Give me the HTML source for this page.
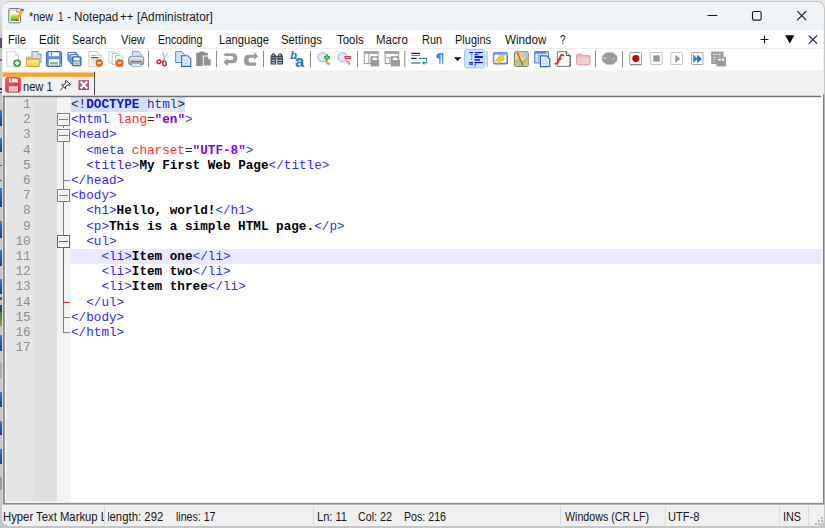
<!DOCTYPE html>
<html><head><meta charset="utf-8"><title>Notepad++</title>
<style>
*{margin:0;padding:0;box-sizing:border-box}
html,body{width:825px;height:528px;overflow:hidden;background:#e6e6e6;font-family:"Liberation Sans",sans-serif}
#bgl{position:absolute;left:0;top:0;width:825px;height:528px;background:linear-gradient(#e6e6e6 0,#e0e0e0 10px,#c6c6c6 40px,#c6c6c6 100%)}
#bgr{position:absolute;left:822px;top:0;width:3px;height:528px;background:linear-gradient(#e8e8e8 0,#e6e6e6 400px,#c8c8c8 528px)}
#bgb{position:absolute;left:0;top:525px;width:825px;height:3px;background:#c4c4c4}
#win{position:absolute;left:1.5px;top:1px;width:823px;height:525.5px;border-radius:8px;background:#f0f0f0;overflow:hidden;border:1px solid #c6c6c6;border-left-color:#ededed}
.abs{position:absolute}
#clip{position:absolute;left:0;top:0;width:825px;height:528px;clip-path:inset(1.8px 0.5px 2px 2.2px round 7.5px)}
#titlebar{position:absolute;left:0;top:0;width:825px;height:30px;background:#eff4f9}
#menubar{position:absolute;left:0;top:30px;width:825px;height:18px;background:#fff}
#toolbar{position:absolute;left:0;top:48px;width:825px;height:22px;background:#fff;border-top:1px solid #eeeeee;box-shadow:0 1px 0 #f7f7f7}
#tabbar{position:absolute;left:0;top:71px;width:825px;height:24px;background:#f0f0f0}
#editor{position:absolute;left:4px;top:95px;width:820px;height:409.5px;background:#fff;border:1px solid #808080;box-shadow:inset 0 0 0 1px #e2e2e2}
#status{position:absolute;left:0;top:505px;width:825px;height:23px;background:#f0f0f0}
.ui{position:absolute;white-space:pre;transform-origin:0 0;color:#161616;line-height:0;height:0}
.ui::before{content:"";display:inline-block;height:0;vertical-align:baseline}
.ln{position:absolute;left:71px;height:15.2px;width:751px;font-family:"Liberation Mono",monospace;font-size:12.67px;line-height:15.2px;white-space:pre}
.ln span{position:absolute;top:0;height:15.2px;display:block}
.num{position:absolute;left:0px;width:30.6px;height:15.2px;text-align:right;font-family:"Liberation Mono",monospace;font-size:12.67px;line-height:15.2px;color:#8e8e8e}
.fb{width:13px;height:13px;border:1px solid #7c7c7c;background:#f1f1f1;box-shadow:inset 0 0 0 1px #fff}
.fb i{position:absolute;left:1px;top:5px;width:9px;height:1px}
.t{color:#2c2cff} .a{color:#ff2e2e} .e{color:#262626} .v{color:#8000ff;font-weight:bold} .b{color:#000;font-weight:bold}
.d{color:#222;background:#d1e0f5} .dk{color:#1212d2;font-weight:bold;background:#d1e0f5} .dp{color:#2c2cc4;background:#e5edfa}
</style></head><body>
<div id="bgl" style="width:4px"></div><div id="bgr"></div><div id="bgb"></div>
<div class="abs" style="left:0;top:37.5px;width:1.8px;height:10.0px;background:#5b4a70"></div>
<div class="abs" style="left:0;top:58.5px;width:1.8px;height:2.5px;background:#6a6a6a"></div>
<div class="abs" style="left:0;top:88px;width:1.8px;height:1.5px;background:#2a3a8a"></div>
<div class="abs" style="left:0;top:91.5px;width:1.8px;height:1.5px;background:#2a3a8a"></div>
<div class="abs" style="left:0;top:110px;width:1.8px;height:16px;background:linear-gradient(#2f86d2,#1f5cae 45%,#17408c)"></div>
<div class="abs" style="left:0;top:138px;width:1.8px;height:14px;background:linear-gradient(#2f86d2,#1f5cae 45%,#17408c)"></div>
<div class="abs" style="left:0;top:164.5px;width:1.8px;height:1.5px;background:#555"></div>
<div class="abs" style="left:0;top:179.5px;width:1.8px;height:1.5px;background:#555"></div>
<div class="abs" style="left:0;top:188px;width:1.8px;height:19px;background:linear-gradient(#2f86d2,#1f5cae 45%,#17408c)"></div>
<div class="abs" style="left:0;top:221px;width:1.8px;height:16.5px;background:linear-gradient(#2f86d2,#1f5cae 45%,#17408c)"></div>
<div class="abs" style="left:0;top:250px;width:1.8px;height:16px;background:linear-gradient(#2f86d2,#1f5cae 45%,#17408c)"></div>
<div class="abs" style="left:0;top:279px;width:1.8px;height:15px;background:linear-gradient(#2f86d2,#1f5cae 45%,#17408c)"></div>
<div class="abs" style="left:0;top:297px;width:1.8px;height:2.5px;background:#556"></div>
<div class="abs" style="left:0;top:305px;width:1.8px;height:7px;background:#2a4a5a"></div>
<div class="abs" style="left:0;top:312px;width:1.8px;height:14px;background:linear-gradient(#4a7a3a,#7aa838)"></div>
<div class="abs" style="left:0;top:335px;width:1.8px;height:16px;background:linear-gradient(#2f86d2,#1f5cae 45%,#17408c)"></div>
<div class="abs" style="left:0;top:363px;width:1.8px;height:15px;background:#a8a8a8"></div>
<div class="abs" style="left:0;top:392px;width:1.8px;height:15px;background:linear-gradient(#2f86d2,#1f5cae 45%,#17408c)"></div>
<div class="abs" style="left:0;top:421px;width:1.8px;height:14px;background:linear-gradient(#2f86d2,#1f5cae 45%,#17408c)"></div>
<div class="abs" style="left:0;top:448.5px;width:1.8px;height:15.0px;background:linear-gradient(#2f86d2,#1f5cae 45%,#17408c)"></div>
<div class="abs" style="left:0;top:477px;width:1.8px;height:13px;background:#9c9c9c"></div>
<div id="win"></div>
<div id="clip">
<div id="titlebar" style="left:3px;top:2px;width:820px;height:28px;border-radius:7px 7px 0 0"></div>
<div id="menubar" style="left:3px;width:820px"></div>
<div id="toolbar" style="left:3px;width:820px"></div>
<div id="tabbar" style="left:3px;width:820px"></div>
<div class="abs" style="left:3px;top:96px;width:821px;height:408px;background:#fff"></div>
<!-- margins -->
<div class="abs" style="left:5px;top:97px;width:28px;height:405px;background:#e5e5e5"></div>
<div class="abs" style="left:33px;top:97px;width:24px;height:405px;background:#e0e0e0"></div>
<div class="abs" style="left:57px;top:97px;width:14px;height:405px;background:#f3f3f3"></div>
<!-- current line highlight -->
<div class="abs" style="left:71px;top:249px;width:751px;height:15.2px;background:#e8e8ff"></div>
<div class="ln" style="top:97.0px"><span class="d" style="left:0.0px;width:15.2px">&lt;!</span><span class="dk" style="left:15.2px;width:53.2px">DOCTYPE</span><span class="d" style="left:68.4px;width:7.6px"> </span><span class="dp" style="left:76.0px;width:30.4px">html</span><span class="d" style="left:106.4px;width:7.6px">&gt;</span></div>
<div class="num" style="top:97.0px">1</div>
<div class="ln" style="top:112.2px"><span class="t" style="left:0.0px;width:38.0px">&lt;html</span><span class="a" style="left:45.6px;width:30.4px">lang</span><span class="e" style="left:76.0px;width:7.6px">=</span><span class="v" style="left:83.6px;width:30.4px">"en"</span><span class="t" style="left:114.0px;width:7.6px">&gt;</span></div>
<div class="num" style="top:112.2px">2</div>
<div class="ln" style="top:127.4px"><span class="t" style="left:0.0px;width:45.6px">&lt;head&gt;</span></div>
<div class="num" style="top:127.4px">3</div>
<div class="ln" style="top:142.6px"><span class="t" style="left:15.2px;width:38.0px">&lt;meta</span><span class="a" style="left:60.8px;width:53.2px">charset</span><span class="e" style="left:114.0px;width:7.6px">=</span><span class="v" style="left:121.6px;width:53.2px">"UTF-8"</span><span class="t" style="left:174.8px;width:7.6px">&gt;</span></div>
<div class="num" style="top:142.6px">4</div>
<div class="ln" style="top:157.8px"><span class="t" style="left:15.2px;width:53.2px">&lt;title&gt;</span><span class="b" style="left:68.4px;width:129.2px">My First Web Page</span><span class="t" style="left:197.6px;width:60.8px">&lt;/title&gt;</span></div>
<div class="num" style="top:157.8px">5</div>
<div class="ln" style="top:173.0px"><span class="t" style="left:0.0px;width:53.2px">&lt;/head&gt;</span></div>
<div class="num" style="top:173.0px">6</div>
<div class="ln" style="top:188.2px"><span class="t" style="left:0.0px;width:45.6px">&lt;body&gt;</span></div>
<div class="num" style="top:188.2px">7</div>
<div class="ln" style="top:203.4px"><span class="t" style="left:15.2px;width:30.4px">&lt;h1&gt;</span><span class="b" style="left:45.6px;width:98.8px">Hello, world!</span><span class="t" style="left:144.4px;width:38.0px">&lt;/h1&gt;</span></div>
<div class="num" style="top:203.4px">8</div>
<div class="ln" style="top:218.6px"><span class="t" style="left:15.2px;width:22.8px">&lt;p&gt;</span><span class="b" style="left:38.0px;width:205.2px">This is a simple HTML page.</span><span class="t" style="left:243.2px;width:30.4px">&lt;/p&gt;</span></div>
<div class="num" style="top:218.6px">9</div>
<div class="ln" style="top:233.8px"><span class="t" style="left:15.2px;width:30.4px">&lt;ul&gt;</span></div>
<div class="num" style="top:233.8px">10</div>
<div class="ln" style="top:249.0px"><span class="t" style="left:30.4px;width:30.4px">&lt;li&gt;</span><span class="b" style="left:60.8px;width:60.8px">Item one</span><span class="t" style="left:121.6px;width:38.0px">&lt;/li&gt;</span></div>
<div class="num" style="top:249.0px">11</div>
<div class="ln" style="top:264.2px"><span class="t" style="left:30.4px;width:30.4px">&lt;li&gt;</span><span class="b" style="left:60.8px;width:60.8px">Item two</span><span class="t" style="left:121.6px;width:38.0px">&lt;/li&gt;</span></div>
<div class="num" style="top:264.2px">12</div>
<div class="ln" style="top:279.4px"><span class="t" style="left:30.4px;width:30.4px">&lt;li&gt;</span><span class="b" style="left:60.8px;width:76.0px">Item three</span><span class="t" style="left:136.8px;width:38.0px">&lt;/li&gt;</span></div>
<div class="num" style="top:279.4px">13</div>
<div class="ln" style="top:294.6px"><span class="t" style="left:15.2px;width:38.0px">&lt;/ul&gt;</span></div>
<div class="num" style="top:294.6px">14</div>
<div class="ln" style="top:309.8px"><span class="t" style="left:0.0px;width:53.2px">&lt;/body&gt;</span></div>
<div class="num" style="top:309.8px">15</div>
<div class="ln" style="top:325.0px"><span class="t" style="left:0.0px;width:53.2px">&lt;/html&gt;</span></div>
<div class="num" style="top:325.0px">16</div>
<div class="ln" style="top:340.2px"></div>
<div class="num" style="top:340.2px">17</div>
<div class="abs" style="left:63px;top:126.3px;width:1px;height:2.2px;background:#808080"></div>
<div class="abs" style="left:63px;top:141.5px;width:1px;height:47.8px;background:#808080"></div>
<div class="abs" style="left:63px;top:202.3px;width:1px;height:32.6px;background:#808080"></div>
<div class="abs" style="left:63px;top:247.9px;width:1px;height:54.3px;background:#ff2020"></div>
<div class="abs" style="left:63px;top:302.2px;width:1px;height:30.4px;background:#808080"></div>
<div class="abs" style="left:63px;top:180.1px;width:7px;height:1px;background:#808080"></div>
<div class="abs" style="left:63px;top:301.7px;width:7px;height:1px;background:#ff2020"></div>
<div class="abs" style="left:63px;top:316.9px;width:7px;height:1px;background:#808080"></div>
<div class="abs" style="left:63px;top:332.1px;width:7px;height:1px;background:#808080"></div>
<div class="abs fb" style="left:57px;top:113.3px;border-color:#7c7c7c"><i style="background:#7c7c7c"></i></div>
<div class="abs fb" style="left:57px;top:128.5px;border-color:#7c7c7c"><i style="background:#7c7c7c"></i></div>
<div class="abs fb" style="left:57px;top:189.3px;border-color:#7c7c7c"><i style="background:#7c7c7c"></i></div>
<div class="abs fb" style="left:57px;top:234.9px;border-color:#ff2020"><i style="background:#ff2020"></i></div>
<svg class="abs" style="left:0;top:90px" width="825" height="420" viewBox="0 90 825 420">
<rect x="4.8" y="97" width="1" height="405" fill="#fff"/>
<rect x="4.8" y="501.5" width="817" height="1.4" fill="#fafafa"/>
<rect x="821.2" y="96" width="1.9" height="407" fill="#f6f6f6"/>
<rect x="2.8" y="94.6" width="820" height="1" fill="#fcfcfc"/>
<rect x="2.8" y="95.7" width="2" height="408" fill="#868686"/>
<rect x="2.8" y="95.7" width="818.4" height="1.5" fill="#727272"/>
<rect x="2.8" y="502.9" width="821.7" height="1.9" fill="#8a8a8a"/>
<rect x="823" y="94.3" width="1.5" height="410.5" fill="#808080"/>
<rect x="2.6" y="504.8" width="822" height=".8" fill="#fafafa"/>
<rect x="1.9" y="505" width="1.1" height="19" fill="#fafafa"/>
</svg>
<!-- tab -->
<svg class="abs" style="left:0;top:70px" width="100" height="10" viewBox="0 70 100 10"><rect x="2.5" y="72.5" width="91.2" height="4.3" fill="#faa02c"/></svg>
<div class="abs" style="left:3px;top:77px;width:91px;height:18px;background:#f1f1f1"></div>
<div class="abs" style="left:94px;top:72px;width:1px;height:23px;background:#4a4a4a"></div>
<!-- window controls -->
<svg class="abs" style="left:0;top:0" width="825" height="48" viewBox="0 0 825 48">
 <g fill="none" stroke="#1b1b1b" stroke-width="1.15" stroke-linecap="round">
  <path d="M708 15.5H717"/>
  <rect x="752.5" y="11.5" width="8.6" height="8.6" rx="1.6"/>
  <path d="M797.5 11.3L806 19.8M806 11.3L797.5 19.8"/>
  <path d="M761 39.5H768M764.5 36V43" stroke="#111"/>
  <path d="M809 35.8L816.8 43.4M816.8 35.8L809 43.4" stroke="#1a2a55" stroke-width="1.2"/>
 </g>
 <path d="M785.2 35.3H794.4L789.8 43.6Z" fill="#000"/>
 <!-- title icon -->
 <g>
  <rect x="8.8" y="8.6" width="11.6" height="14.2" rx="1" fill="#fff" stroke="#6e6e6e" stroke-width="1"/>
  <path d="M16.8 8.6V12.2H20.4" fill="#e8e8e8" stroke="#6e6e6e" stroke-width=".8"/>
  <path d="M10 10.3H16" stroke="#999" stroke-width="1" stroke-dasharray="1 .8"/>
  <defs><linearGradient id="gg" x1="0" y1="0" x2="0" y2="1"><stop offset="0" stop-color="#e6ee70"/><stop offset=".55" stop-color="#7ed63a"/><stop offset=".85" stop-color="#30b41c"/><stop offset="1" stop-color="#0f7a0a"/></linearGradient></defs>
  <rect x="10.6" y="14.3" width="8.4" height="6.4" fill="url(#gg)"/>
  <path d="M18.03 20.29L15.77 18.99L20.35 11.01L22.61 12.31Z" fill="#f4a60e"/>
  <path d="M16.9 19.64L20.35 11.01L21.5 11.7Z" fill="#fcc84a" opacity=".7"/>
  <path d="M16 21.2L18.03 20.29L15.77 18.99Z" fill="#6a4a20"/>
  <path d="M20.35 11.01L22.61 12.31L23.31 11.1L21.05 9.8Z" fill="#a8aec0"/>
  <path d="M21.05 9.8L23.31 11.1L24 9.89L21.74 8.59Z" fill="#a80a0a"/>
 </g>
</svg>
<!-- toolbar icons -->
<svg class="abs" style="left:0;top:48px" width="825" height="24" viewBox="0 48 825 24">
<defs>
 <linearGradient id="gfold" x1="0" y1="0" x2="0" y2="1"><stop offset="0" stop-color="#fdf0a0"/><stop offset="1" stop-color="#f8d24a"/></linearGradient>
 <linearGradient id="gprn" x1="0" y1="0" x2="0" y2="1"><stop offset="0" stop-color="#f4f4f4"/><stop offset=".5" stop-color="#c8c8c8"/><stop offset="1" stop-color="#8e8e8e"/></linearGradient>
 <linearGradient id="gpil" x1="0" y1="0" x2="0" y2="1"><stop offset="0" stop-color="#2a7af0"/><stop offset="1" stop-color="#6ab0ff"/></linearGradient>
</defs>
<!-- separators -->
<g stroke="#8c8c8c" stroke-width="1">
 <path d="M148.5 50.8V67.2M216.5 50.8V67.2M263.5 50.8V67.2M310.5 50.8V67.2M357.5 50.8V67.2M404.8 50.8V67.2M595.5 50.8V67.2M622.5 50.8V67.2"/>
</g>
<path d="M487 51V67" stroke="#c4c4c4" stroke-width="1.6"/>

<!-- 1 new -->
<path d="M6.9 51.7H15.2L18.7 55.2V66.3H6.9Z" fill="#fff" stroke="#cdcdcd"/>
<path d="M15.2 51.7V55.2H18.7" fill="#f2f2f2" stroke="#d4d4d4"/>
<circle cx="17.2" cy="63.2" r="3.8" fill="#2f8f22"/>
<circle cx="17.2" cy="63.2" r="3" fill="#48a838"/>
<path d="M15 63.2H19.4M17.2 61V65.4" stroke="#fff" stroke-width="1.7"/>

<!-- 2 open -->
<path d="M31.9 51.6H38L41 54.6V62.6H31.9Z" fill="#cfe0f8" stroke="#6a98e0"/>
<path d="M38 51.6V54.6H41" fill="#e8f0fc" stroke="#6a98e0" stroke-width=".8"/>
<path d="M26.4 57.2H30.8L31.8 58.6H39.3V66.4H26.4Z" fill="#f6b648" stroke="#e59a28"/>
<rect x="27" y="60.2" width="11.8" height="5.7" fill="url(#gfold)"/>

<!-- 3 save -->
<rect x="46.4" y="51.6" width="15.2" height="14.9" rx="1.6" fill="#5d8cdc" stroke="#3868c4"/>
<rect x="48.8" y="52.4" width="10.4" height="3.8" fill="#fff"/>
<rect x="50.8" y="52.8" width="1.2" height="2.6" fill="#3868c4"/>
<rect x="48.8" y="59.2" width="10.4" height="6.3" fill="#f2f6ff"/>
<rect x="50" y="62" width="8" height="2.5" fill="#86c456"/>
<rect x="59.8" y="64.4" width="1.1" height="1.1" fill="#fff"/>

<!-- 4 save all -->
<rect x="67.9" y="52.3" width="8.6" height="8.8" rx=".8" fill="#8db2ec" stroke="#4a78cc"/>
<rect x="69.2" y="53" width="5.4" height="2" fill="#e8f0ff"/>
<rect x="70" y="54.6" width="8.6" height="8.8" rx=".8" fill="#8db2ec" stroke="#4a78cc"/>
<rect x="71.4" y="55.2" width="5.4" height="2" fill="#e8f0ff"/>
<rect x="72.2" y="56.8" width="8.8" height="9" rx=".8" fill="#4f80d6" stroke="#2d5cb8"/>
<rect x="73.6" y="57.6" width="6" height="2.8" fill="#fff"/>
<rect x="73.4" y="61.6" width="6.4" height="3.4" fill="#dfeaff"/>
<rect x="73.9" y="62.7" width="5.4" height="1.8" fill="#8fd24c"/>

<!-- 5 close -->
<path d="M88.9 51.7H97.5L101.1 55.3V66.3H88.9Z" fill="#fff" stroke="#c6c6c6"/>
<path d="M97.5 51.7V55.3H101.1" fill="#f2f2f2" stroke="#c6c6c6" stroke-width=".8"/>
<path d="M91 55.4H96.5" stroke="#999" stroke-width=".9"/>
<path d="M91 57.6H98.6" stroke="#555" stroke-width="1.1"/>
<path d="M91 59.8H98" stroke="#b4b4b4" stroke-width=".9"/>
<path d="M91 62H95" stroke="#c4c4c4" stroke-width=".9"/>
<path d="M91 64H94" stroke="#d4d4d4" stroke-width=".9"/>
<circle cx="99.2" cy="62.9" r="3.7" fill="#dc5810"/>
<circle cx="99.2" cy="62.9" r="2.9" fill="#f06a18"/>
<rect x="97.4" y="62.2" width="3.6" height="1.4" fill="#fff"/>

<!-- 6 close all -->
<path d="M108.9 51.7H113.8L116.4 54.2V63H108.9Z" fill="#fff" stroke="#cacaca"/>
<path d="M112.2 53.4H117.5L120.2 56V64.8H112.2Z" fill="#fff" stroke="#b8b8b8"/>
<path d="M115.6 55.4H120.4L123 58V66.5H115.6Z" fill="#fff" stroke="#bcbcbc"/>
<path d="M117 58.6H120" stroke="#ccc" stroke-width=".9"/>
<circle cx="119.6" cy="63" r="3.7" fill="#dc5810"/>
<circle cx="119.6" cy="63" r="2.9" fill="#f06a18"/>
<rect x="117.8" y="62.3" width="3.6" height="1.4" fill="#fff"/>

<!-- 7 print -->
<path d="M132.3 51.6H138.5L141.2 54.3V58H132.3Z" fill="#d6e6fc" stroke="#6c9ee6"/>
<rect x="128.7" y="56.3" width="15" height="8.7" rx="2.2" fill="url(#gprn)" stroke="#7a7a7a" stroke-width=".9"/>
<rect x="131" y="61" width="10.4" height="1.1" fill="#6e6e6e"/>
<rect x="131.8" y="63.4" width="8.8" height="3.1" rx=".8" fill="#e6f0ff" stroke="#7eace8" stroke-width=".9"/>

<!-- 8 cut -->
<path d="M163.2 51.6L164.6 60.8" stroke="#9bbbe0" stroke-width="1.2"/>
<path d="M167.8 53L162.6 61" stroke="#a8c6e6" stroke-width="1.3"/>
<ellipse cx="159" cy="61.8" rx="2" ry="1.6" transform="rotate(-35 159 61.8)" fill="none" stroke="#cc2a2a" stroke-width="1.5"/>
<ellipse cx="164.4" cy="63.4" rx="1.7" ry="2.4" transform="rotate(-10 164.4 63.4)" fill="none" stroke="#cc2a2a" stroke-width="1.5"/>

<!-- 9 copy -->
<path d="M175.7 51.7H181.6L184.6 54.7V62.5H175.7Z" fill="#dde9fb" stroke="#4a7edc"/>
<path d="M177.4 55H182.6M177.4 57H182.6M177.4 59H182.6" stroke="#b8d0f4" stroke-width=".8"/>
<path d="M181.7 55.7H187.8L190.8 58.7V66.4H181.7Z" fill="#e6effc" stroke="#2f62cc" stroke-width="1.1"/>
<path d="M183.6 59.4H188.6M183.6 61.4H188.6M183.6 63.4H188.6" stroke="#b4ccf4" stroke-width=".8"/>

<!-- 10 paste (disabled) -->
<rect x="196.2" y="52.8" width="11.6" height="13.2" fill="#8e8e8e"/>
<rect x="199.4" y="51.6" width="5.2" height="2.4" fill="#8e8e8e"/>
<path d="M202.8 55.6H208.6L211.6 58.6V66.4H202.8Z" fill="#fff"/>
<path d="M203.7 56.5H208.1V59.2H210.7V65.6H203.7Z" fill="#949494"/>

<!-- 11 undo -->
<path d="M224.4 53.2H233Q237.3 53.2 237.3 58.2Q237.3 63.3 233 63.3H227.2V60.1H231.6Q233.4 60.1 233.4 58.1Q233.4 56.1 231.6 56.1H224.4Z" fill="#9a9a9a"/>
<path d="M227.8 58.4L223.3 62.3L227.8 66.3Z" fill="#9a9a9a"/>
<!-- 12 redo -->
<path d="M254.6 54.8H248.5Q244 54.8 244 60.2Q244 65.7 248.5 65.7H256V62.4H250.2Q248.5 62.4 248.5 60Q248.5 57.7 250.2 57.7H254.6Z" fill="#9a9a9a"/>
<path d="M254.2 52.2L258.3 56.1L254.2 60Z" fill="#9a9a9a"/>

<!-- 13 find -->
<path d="M272.2 53.4H274.8L276.2 56.6V64.4H270.6V56.6Z" fill="#343a42"/>
<path d="M278.8 53.4H281.4L283 56.6V64.4H277.4V56.6Z" fill="#343a42"/>
<rect x="275.6" y="55.8" width="2.4" height="2.8" fill="#4c545e"/>
<rect x="272.4" y="54.4" width="1.8" height="1.8" fill="#8eaccc"/>
<rect x="279" y="54.4" width="1.8" height="1.8" fill="#8eaccc"/>
<rect x="270.6" y="57.2" width="12.4" height="1.2" fill="#7c96b4"/>
<rect x="271.6" y="59.8" width="3.6" height="1.2" fill="#c2d2e4"/>
<rect x="271.6" y="62.2" width="3.6" height="1.2" fill="#c2d2e4"/>
<rect x="278.4" y="59.8" width="3.6" height="1.2" fill="#c2d2e4"/>
<rect x="278.4" y="62.2" width="3.6" height="1.2" fill="#c2d2e4"/>

<!-- 14 replace -->
<text x="290.2" y="58.8" font-family="Liberation Sans" font-weight="bold" font-style="italic" font-size="11" fill="#2a6ee6">b</text>
<text x="295" y="66.6" font-family="Liberation Sans" font-weight="bold" font-size="16.5" fill="#2a72e8">a</text>
<path d="M294.4 56.4L297.6 58.4L298.8 57.2L299.6 61.8L295.2 61L296.4 59.8L293.6 57.6Z" fill="#2f9a3c"/>
<path d="M295.8 58L297.8 59.6" stroke="#a8e0a0" stroke-width=".8"/>

<!-- 15 zoom in -->
<path d="M326.2 61.6L328.8 64" stroke="#d4a566" stroke-width="2.4" stroke-linecap="round"/>
<circle cx="322.4" cy="57.2" r="4.5" fill="#dde9fb" stroke="#a6c2ee" stroke-width="1.3"/>
<path d="M324 57.4H330M327 54.4V60.4" stroke="#36a040" stroke-width="2.6"/>
<path d="M325.4 57.4H328.6M327 55.8V59" stroke="#8ad08a" stroke-width=".9"/>
<!-- 16 zoom out -->
<path d="M347 61.4L349.6 63.8" stroke="#d4a566" stroke-width="2.4" stroke-linecap="round"/>
<circle cx="342.4" cy="57.2" r="4.5" fill="#dde9fb" stroke="#a6c2ee" stroke-width="1.3"/>
<rect x="344.4" y="56" width="6.5" height="2.9" fill="#f02c34"/>
<rect x="345.4" y="57" width="4.5" height=".9" fill="#ffb0b0"/>

<!-- 17 sync v -->
<rect x="364.3" y="52" width="13.8" height="11.6" fill="#fff" stroke="#9a9a9a"/>
<rect x="363.8" y="51.5" width="14.8" height="2.3" fill="#9a9a9a"/>
<path d="M368.9 53.8V63.6" stroke="#9a9a9a"/>
<rect x="370.6" y="56.2" width="7.6" height="4.4" fill="#9a9a9a"/>
<path d="M372.4 60.2A2.5 2.6 0 0 1 377.4 60.2Z" fill="#fff"/>
<rect x="370.6" y="60" width="8.6" height="6.4" fill="#9a9a9a"/>
<rect x="371.6" y="54.6" width="5.6" height="1.3" fill="#fff"/>
<!-- 18 sync h -->
<rect x="385.1" y="52" width="13.6" height="11.6" fill="#fff" stroke="#9a9a9a"/>
<rect x="384.6" y="51.5" width="14.6" height="2.3" fill="#9a9a9a"/>
<path d="M385 57.6H391M389.6 57.6V63.6" stroke="#b0b0b0"/>
<rect x="390.8" y="56.2" width="7.9" height="4.4" fill="#9a9a9a"/>
<path d="M392.6 60.2A2.6 2.6 0 0 1 397.8 60.2Z" fill="#fff"/>
<rect x="390.6" y="60" width="9.4" height="6.4" fill="#9a9a9a"/>

<!-- 19 wrap -->
<rect x="411.2" y="52.8" width="8.8" height="1.2" fill="#222"/>
<rect x="411.2" y="54.9" width="8.8" height="1.1" fill="#777"/>
<rect x="411.2" y="57.8" width="5.5" height="1.2" fill="#222"/>
<path d="M419 58.4H426.6V62.9H423.6" fill="none" stroke="#3f7fe4" stroke-width="1.1"/>
<path d="M424.4 60.7L422 62.9L424.4 65.1Z" fill="#2f6fd8"/>
<rect x="411.2" y="62" width="9.3" height="1.9" fill="#6ea4f2"/>

<!-- 20 pilcrow -->
<path d="M439.2 53.2H443.3V54.5H439.2Z" fill="#2f7ef0"/>
<rect x="439.1" y="53.2" width="1.5" height="11" fill="url(#gpil)"/>
<rect x="441.8" y="53.2" width="1.5" height="11" fill="url(#gpil)"/>
<path d="M439.3 53.2V58.8A2.9 2.8 0 0 1 439.3 53.2Z" fill="#3a86f2"/>

<!-- 21 dropdown -->
<path d="M454 57.3H461.2L457.6 61.3Z" fill="#000"/>

<!-- 22 indent guide (checked) -->
<rect x="464.5" y="49.4" width="20.2" height="18.6" rx="2.2" fill="#cce4ff" stroke="#99ccff" stroke-width="1"/>
<g fill="#0a14f0">
 <rect x="469.2" y="52" width="3.8" height="1.1"/><rect x="474.6" y="52" width="8.2" height="1.1"/>
 <rect x="474.6" y="54.2" width="3.6" height="1.1"/>
 <rect x="474.6" y="56" width="8.2" height="2.1"/>
 <rect x="474.6" y="59.2" width="5.4" height="1.5"/>
 <rect x="469.2" y="62" width="3.8" height="1.1"/><rect x="474.6" y="62" width="8.2" height="1.1"/>
 <rect x="469.2" y="63.6" width="3.8" height="1.1"/><rect x="474.6" y="63.6" width="1.6" height="1.1"/>
 <rect x="474.6" y="65.6" width="1" height="1"/>
</g>
<path d="M471.6 54V61" stroke="#f03040" stroke-width="1.1" stroke-dasharray="1.2 1.2"/>

<!-- 23 window + bolt -->
<rect x="493.6" y="52.8" width="13.6" height="10.8" rx="1" fill="#fff" stroke="#5f94dc" stroke-width="1.5"/>
<rect x="493.6" y="52.4" width="13.6" height="2.4" rx=".8" fill="#6fa2e6"/>
<path d="M494 63.8H507.4V56" fill="none" stroke="#4676c2" stroke-width="1"/>
<path d="M499.6 55.6H505L502.6 58.2H505L503.2 61H500L497.6 65.8L498.2 61H495.2Z" fill="#f6c834" stroke="#e4ac1c" stroke-width=".5"/>

<!-- 24 map -->
<rect x="514.4" y="51.7" width="13.8" height="14.8" rx="1.8" fill="#ece470" stroke="#84806c" stroke-width="1.1"/>
<path d="M515 60L519.5 58L522 66H515Z" fill="#98d878"/>
<path d="M522.4 61L527.6 59.5V66H523.6Z" fill="#a6dc80"/>
<rect x="522.4" y="52.4" width="5.2" height="5.2" fill="#a4caf0"/>
<path d="M527.2 58L521.8 63.4" stroke="#f09838" stroke-width="1.4"/>
<path d="M517.2 52.4L523 65.8" stroke="#f2486a" stroke-width="1.6"/>
<path d="M519.4 52.4L521 56" stroke="#f8a0b0" stroke-width="1"/>

<!-- 25 doc list -->
<rect x="534.7" y="51.7" width="13.8" height="11.3" rx="1" fill="#dbe8fb" stroke="#4c86e0" stroke-width="1.2"/>
<rect x="534.7" y="51.4" width="13.8" height="2.2" fill="#4c86e0"/>
<rect x="546.2" y="51.9" width="1.5" height="1.3" fill="#fff"/>
<path d="M538.6 54V63M541.6 54V56" stroke="#7aa6ec" stroke-width=".9"/>
<path d="M540.4 55.9H546.6L549.8 59.1V66.6H540.4Z" fill="#e6effc" stroke="#2f62cc" stroke-width="1.2"/>
<path d="M542.4 59.6H547.6M542.4 61.6H547.6M542.4 63.6H547.6" stroke="#b4ccf4" stroke-width=".8"/>

<!-- 26 function list -->
<path d="M557.3 51.7H566.4L570.2 55.5V66.4H557.3Z" fill="#fffef8" stroke="#6a6a6a" stroke-width=".9"/>
<path d="M566.4 51.7V55.5H570.2" fill="#eee" stroke="#333" stroke-width=".9"/>
<path d="M570.2 56V66" stroke="#222" stroke-width="1" stroke-dasharray="1.6 1.2"/>
<path d="M555.4 63.6C557.2 64.2 558.3 62.4 559 60L560.5 56.2C561.2 54.6 562.4 54.5 563.4 55.3" fill="none" stroke="#e8222e" stroke-width="1.8" stroke-linecap="round"/>
<path d="M557.4 59.2H561.6" stroke="#e8222e" stroke-width="1.4"/>

<!-- 27 folder as workspace -->
<path d="M576.6 55.4Q576.6 54.2 577.8 54.2H581.5L582.8 55.6H588.8Q590 55.6 590 56.8V63.6Q590 64.8 588.8 64.8H577.8Q576.6 64.8 576.6 63.6Z" fill="#eeaab2" stroke="#e48c96" stroke-width=".8"/>
<rect x="577.3" y="57.8" width="12" height="6.3" rx=".6" fill="#f6ccd0"/>
<path d="M578 57H586" stroke="#f8dcdc" stroke-width=".8"/>

<!-- 28 monitoring -->
<path d="M606.4 52.8H613L616.8 56V61L613 64.2H606.4L602.4 61V56Z" fill="#9a9a9a" stroke="#9a9a9a" stroke-width=".6" stroke-linejoin="round"/>
<path d="M603.8 57.6L604.8 58.6L606 57.2" fill="none" stroke="#fff" stroke-width=".9"/>
<path d="M612.6 58.4H614.6" stroke="#e0e0e0" stroke-width=".9"/>

<!-- 29-32 macro -->
<rect x="629.7" y="52.5" width="11.9" height="12" rx="1" fill="#fff" stroke="#9c9c9c"/>
<path d="M630 64.8H641.8" stroke="#777" stroke-width=".8"/>
<circle cx="635.8" cy="58.4" r="3.5" fill="#cc0008"/>
<rect x="650.4" y="52.5" width="11.7" height="12" rx="1" fill="#fff" stroke="#c4c4c4"/>
<rect x="653.2" y="55.4" width="6.6" height="6.2" fill="#9a9a9a"/>
<rect x="670.8" y="52.5" width="11.7" height="12" rx="1" fill="#fff" stroke="#c4c4c4"/>
<path d="M675.2 54.8L680.6 58.8L675.2 62.8Z" fill="#9c9c9c"/>
<rect x="691.6" y="52.5" width="11.4" height="12" rx="1" fill="#fff" stroke="#a8a8a8"/>
<path d="M693.2 54.4L697.8 58.8L693.2 63.2Z" fill="#3a7cf0"/>
<path d="M697.2 54.4L702 58.8L697.2 63.2Z" fill="#2a6ae6"/>

<!-- 33 save macro -->
<rect x="711.2" y="51.6" width="12.4" height="12.4" fill="#9a9a9a"/>
<path d="M713 54.4H721.6" stroke="#e8e8e8" stroke-width="1.2" stroke-dasharray="2 .8"/>
<path d="M713 57.4H716M713 59.6H716M713 61.8H715" stroke="#ddd" stroke-width=".9"/>
<rect x="716.4" y="57" width="9.6" height="9.4" fill="#9a9a9a"/>
<path d="M716.4 57H726" stroke="#b8b8b8" stroke-width=".8"/>
<rect x="718.2" y="58.6" width="2.6" height="2.2" fill="#f0f0f0"/>
<rect x="721.8" y="58.6" width="2.6" height="2.2" fill="#f0f0f0"/>
</svg>

<!-- tab icons -->
<svg class="abs" style="left:0;top:72px" width="100" height="24" viewBox="0 72 100 24">
 <defs><linearGradient id="gred" x1="0" y1="0" x2="1" y2="1"><stop offset="0" stop-color="#f2606a"/><stop offset="1" stop-color="#d82832"/></linearGradient>
 <linearGradient id="gcl" x1="0" y1="0" x2="0" y2="1"><stop offset="0" stop-color="#b06a8e"/><stop offset="1" stop-color="#964a72"/></linearGradient></defs>
 <rect x="5.6" y="77.5" width="14.8" height="14.7" rx="1.8" fill="url(#gred)" stroke="#e03a46" stroke-width=".8"/>
 <rect x="9" y="78.6" width="8.8" height="3.8" fill="#fff"/>
 <rect x="10.8" y="79" width="1.2" height="2.6" fill="#e8505a"/>
 <rect x="8.8" y="86.4" width="9.2" height="5" fill="#fdeaea"/>
 <rect x="10" y="88.4" width="6.8" height="2" fill="#f4a8ae"/>
 <!-- pin -->
 <g fill="none" stroke="#222" stroke-width="1" stroke-linejoin="round">
  <path d="M66.2 80.4L70.4 84.6L69.4 85.2L67.6 84.8L65.4 87L65.6 88.8L61.6 84.8L63.4 85L65.6 82.8L65.4 81Z"/>
  <path d="M63.6 86.8L60.2 90.2"/>
 </g>
 <!-- close -->
 <rect x="78.4" y="80" width="10.6" height="10" fill="url(#gcl)"/>
 <path d="M80.6 81.6L87.2 88.4M87.2 81.6L80.6 88.4" stroke="#fff" stroke-width="2.1"/>
</svg>

<div id="m0" class="ui" style="left:8.48px;top:40.34px;font-size:12.3px;transform:scaleX(0.9118);">File</div>
<div id="m1" class="ui" style="left:39.44px;top:40.34px;font-size:12.3px;transform:scaleX(0.9502);">Edit</div>
<div id="m2" class="ui" style="left:72.30px;top:40.34px;font-size:12.3px;transform:scaleX(0.8816);">Search</div>
<div id="m3" class="ui" style="left:120.50px;top:40.34px;font-size:12.3px;transform:scaleX(0.9039);">View</div>
<div id="m4" class="ui" style="left:157.80px;top:40.34px;font-size:12.3px;transform:scaleX(0.8667);">Encoding</div>
<div id="m5" class="ui" style="left:218.95px;top:40.34px;font-size:12.3px;transform:scaleX(0.9139);">Language</div>
<div id="m6" class="ui" style="left:281.45px;top:40.34px;font-size:12.3px;transform:scaleX(0.9195);">Settings</div>
<div id="m7" class="ui" style="left:336.50px;top:40.34px;font-size:12.3px;transform:scaleX(0.9297);">Tools</div>
<div id="m8" class="ui" style="left:376.07px;top:40.34px;font-size:12.3px;transform:scaleX(0.9302);">Macro</div>
<div id="m9" class="ui" style="left:422.00px;top:40.34px;font-size:12.3px;transform:scaleX(0.8882);">Run</div>
<div id="m10" class="ui" style="left:454.61px;top:40.34px;font-size:12.3px;transform:scaleX(0.8933);">Plugins</div>
<div id="m11" class="ui" style="left:504.50px;top:40.34px;font-size:12.3px;transform:scaleX(0.9470);">Window</div>
<div id="m12" class="ui" style="left:559.70px;top:40.34px;font-size:12.3px;transform:scaleX(0.8000);">?</div>
<div id="t0" class="ui" style="left:29.05px;top:17.24px;font-size:12.3px;transform:scaleX(0.8857);">*new</div>
<div id="t1" class="ui" style="left:57.94px;top:17.24px;font-size:12.3px;transform:scaleX(0.8000);">1</div>
<div id="t2" class="ui" style="left:67.46px;top:17.24px;font-size:12.3px;transform:scaleX(0.9000);">-</div>
<div id="t3" class="ui" style="left:74.35px;top:17.24px;font-size:12.3px;transform:scaleX(0.9507);">Notepad</div>
<div id="t4" class="ui" style="left:119.98px;top:17.24px;font-size:12.3px;transform:scaleX(0.9309);">++</div>
<div id="t5" class="ui" style="left:136.78px;top:17.24px;font-size:12.3px;transform:scaleX(0.9572);">[Administrator]</div>
<div id="tab" class="ui" style="left:22.95px;top:86.74px;font-size:12.3px;transform:scaleX(0.9014);">new 1</div>
<div id="s0" class="ui" style="left:3.08px;top:517.24px;font-size:12.3px;transform:scaleX(0.9191);">Hyper Text Markup L</div>
<div id="s1" class="ui" style="left:107.30px;top:517.24px;font-size:12.3px;transform:scaleX(0.9249);">length: 292</div>
<div id="s2" class="ui" style="left:176.00px;top:517.24px;font-size:12.3px;transform:scaleX(0.8602);">lines: 17</div>
<div id="s3" class="ui" style="left:316.97px;top:517.24px;font-size:12.3px;transform:scaleX(0.9020);">Ln: 11</div>
<div id="s4" class="ui" style="left:358.00px;top:517.24px;font-size:12.3px;transform:scaleX(0.8690);">Col: 22</div>
<div id="s5" class="ui" style="left:404.00px;top:517.24px;font-size:12.3px;transform:scaleX(0.8646);">Pos: 216</div>
<div id="s6" class="ui" style="left:564.50px;top:517.24px;font-size:12.3px;transform:scaleX(0.8667);">Windows (CR LF)</div>
<div id="s7" class="ui" style="left:668.30px;top:517.24px;font-size:12.3px;transform:scaleX(0.8991);">UTF-8</div>
<div id="s8" class="ui" style="left:782.62px;top:517.24px;font-size:12.3px;transform:scaleX(0.8810);">INS</div>
<div class="abs" style="left:103.9px;top:507px;width:4.4px;height:17px;background:#f0f0f0"></div>
<div class="abs" style="left:104px;top:506px;width:1px;height:19px;background:#d9d9d9"></div>
<div class="abs" style="left:313px;top:506px;width:1px;height:19px;background:#d9d9d9"></div>
<div class="abs" style="left:560px;top:506px;width:1px;height:19px;background:#d9d9d9"></div>
<div class="abs" style="left:665px;top:506px;width:1px;height:19px;background:#d9d9d9"></div>
<div class="abs" style="left:779px;top:506px;width:1px;height:19px;background:#d9d9d9"></div>
<div class="abs" style="left:808px;top:506px;width:1px;height:19px;background:#d9d9d9"></div>
<div class="abs" style="left:820.5px;top:516.5px;width:2px;height:2px;background:#b4b4b4"></div>
<div class="abs" style="left:817.5px;top:519.8px;width:2px;height:2px;background:#b4b4b4"></div>
<div class="abs" style="left:820.5px;top:519.8px;width:2px;height:2px;background:#b4b4b4"></div>
<div class="abs" style="left:814.5px;top:523px;width:2px;height:2px;background:#b4b4b4"></div>
<div class="abs" style="left:817.5px;top:523px;width:2px;height:2px;background:#b4b4b4"></div>
<div class="abs" style="left:820.5px;top:523px;width:2px;height:2px;background:#b4b4b4"></div>
</div>
</body></html>
